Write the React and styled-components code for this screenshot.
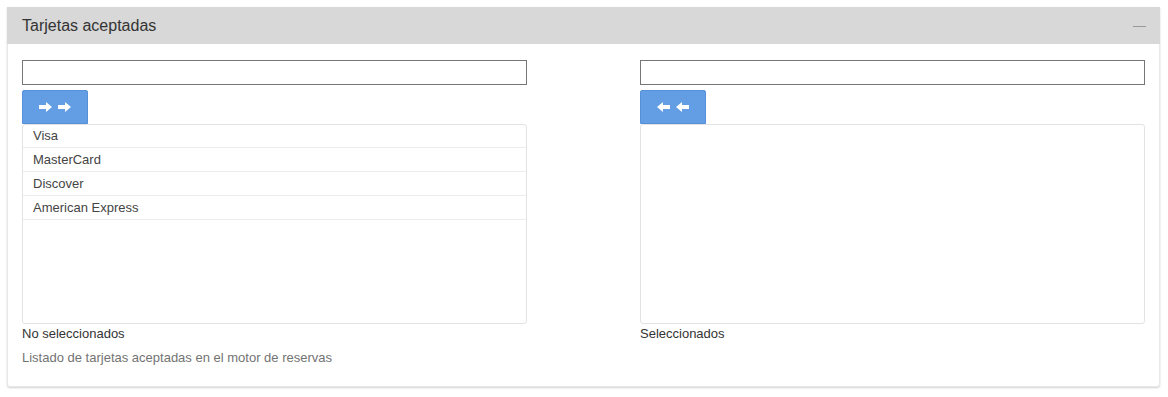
import React from 'react';
import styled, { createGlobalStyle } from 'styled-components';

const Global = createGlobalStyle`
  body {
    margin: 0;
    background: #fff;
    font-family: "Liberation Sans", Arial, sans-serif;
    font-size: 13px;
    color: #333;
  }
`

const Page = styled.div`
  padding: 7px 8px 10px 7px;
`

const Panel = styled.div`
  background: #fff;
  border: 1px solid #e8e8e8;
  border-top: none;
  border-radius: 0 0 3px 3px;
  box-shadow: 0 1px 2px rgba(0, 0, 0, 0.18);
`

const Header = styled.div`
  display: flex;
  align-items: center;
  justify-content: space-between;
  height: 37px;
  background: #d8d8d8;
  padding: 0 14px 0 15px;
  margin: 0 -1px;

  h3 {
    margin: 0;
    font-size: 16px;
    font-weight: normal;
    color: #333;
  }
`

const Collapse = styled.span`
  display: block;
  width: 13px;
  height: 1px;
  background: #999;
  margin-top: 1px;
`

const Body = styled.div`
  padding: 16px 14px 19px 14px;
`

const Columns = styled.div`
  display: grid;
  grid-template-columns: 505px 505px;
  column-gap: 113px;
`

const Column = styled.div`
  display: flex;
  flex-direction: column;
  align-items: flex-start;
`

const Filter = styled.input`
  box-sizing: border-box;
  width: 100%;
  height: 25px;
  margin: 0;
  border: 1px solid #767676;
  border-radius: 0;
  padding: 2px 4px;
  font: inherit;
  outline: none;
`

const MoveButton = styled.button`
  display: flex;
  align-items: center;
  justify-content: center;
  gap: 6px;
  width: 66px;
  height: 34px;
  margin-top: 5px;
  padding: 0 1px 0 0;
  background: #639ee4;
  border: 1px solid #5590db;
  border-radius: 2px 2px 0 0;
  cursor: pointer;
`

const ListBox = styled.div`
  box-sizing: border-box;
  width: 100%;
  height: 200px;
  border: 1px solid #e3e3e3;
  border-radius: 3px;
  overflow: hidden;
`

const Item = styled.div`
  height: 23px;
  line-height: 23px;
  padding: 0 10px;
  border-bottom: 1px solid #ececec;
  color: #444;

  &:first-child {
    height: 22px;
    line-height: 22px;
  }
`

const Caption = styled.div`
  margin-top: 1px;
  line-height: 18px;
  color: #333;
`

const HelpText = styled.p`
  margin: 6px 0 0;
  line-height: 18px;
  color: #737373;
`

const Arrow = ({ left }) => (
  <svg width="13" height="10" viewBox="0 0 13 10" style={{ transform: left ? 'scaleX(-1)' : 'none' }}>
    <path d="M0 3h7V0l6 5-6 5V7H0z" fill="#fff" />
  </svg>
)

const cards = ['Visa', 'MasterCard', 'Discover', 'American Express']

export default function App() {
  return (
    <Page>
      <Global />
      <Panel>
        <Header>
          <h3>Tarjetas aceptadas</h3>
          <Collapse />
        </Header>
        <Body>
          <Columns>
            <Column>
              <Filter type="text" />
              <MoveButton>
                <Arrow />
                <Arrow />
              </MoveButton>
              <ListBox>
                {cards.map((c) => (
                  <Item key={c}>{c}</Item>
                ))}
              </ListBox>
              <Caption>No seleccionados</Caption>
            </Column>
            <Column>
              <Filter type="text" />
              <MoveButton>
                <Arrow left />
                <Arrow left />
              </MoveButton>
              <ListBox />
              <Caption>Seleccionados</Caption>
            </Column>
          </Columns>
          <HelpText>Listado de tarjetas aceptadas en el motor de reservas</HelpText>
        </Body>
      </Panel>
    </Page>
  );
}
